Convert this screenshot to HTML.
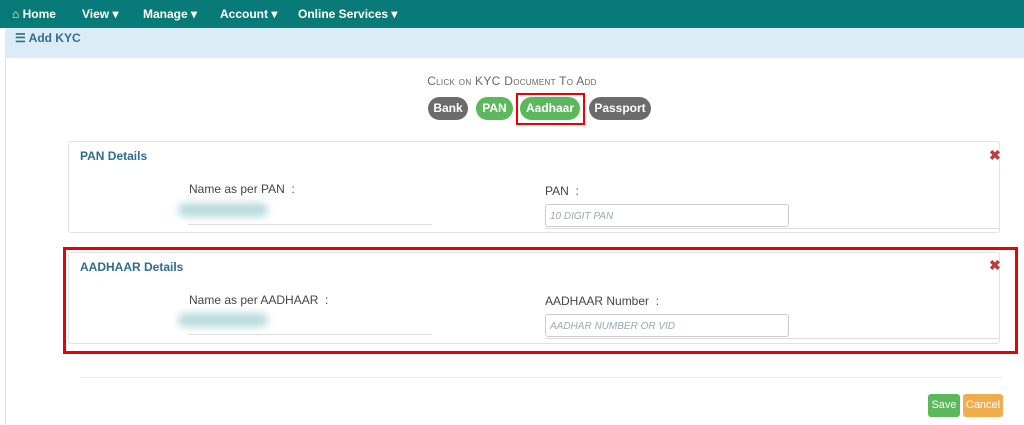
<!DOCTYPE html><html><head><style>
*{box-sizing:border-box;margin:0;padding:0}
body{width:1024px;height:425px;background:#fff;font-family:"Liberation Sans",sans-serif;position:relative;overflow:hidden;color:#333}
.a{position:absolute}
.nav{left:0;top:0;width:1024px;height:28px;background:#087a77;color:#fff;font-weight:bold;font-size:12px}
.nav span{position:absolute;top:7px}
.sub{left:5px;top:28px;width:1019px;height:30px;background:#dcecf6}
.pill{position:absolute;top:97px;height:23px;border-radius:12px;color:#fff;font-weight:bold;font-size:12px;line-height:23px;text-align:center}
.panel{border:1px solid #e2e2e2;border-radius:3px;background:#fff}
.h{color:#2f6d8c;font-weight:bold;font-size:12px}
.lbl{font-size:12px;color:#444}
.x{color:#b94040;font-weight:bold;font-size:14px}
.inp{border:1px solid #ccc;border-radius:3px;height:23px;font-style:italic;font-size:10px;color:#9aa;padding:6px 4px}
.blur{background:#b8dadc;filter:blur(4px);border-radius:8px}
</style></head><body>
<div class="a nav"><span style="left:12px">⌂ Home</span><span style="left:82px">View ▾</span><span style="left:143px">Manage ▾</span><span style="left:220px">Account ▾</span><span style="left:298px">Online Services ▾</span></div>
<div class="a" style="left:5px;top:58px;width:1px;height:367px;background:#dde"></div>
<div class="a sub"><span class="a" style="left:10px;top:3px;color:#2f6d8c;font-weight:bold;font-size:12px">☰ Add KYC</span></div>
<div class="a" style="left:0;top:74px;width:1024px;text-align:center;font-size:12px;color:#666;letter-spacing:.3px;font-variant:small-caps">Click on KYC Document To Add</div>
<div class="pill" style="left:428px;width:40px;background:#6b6b6b">Bank</div>
<div class="pill" style="left:476px;width:37px;background:#5cb85c">PAN</div>
<div class="pill" style="left:520px;width:60px;background:#5cb85c">Aadhaar</div>
<div class="pill" style="left:589px;width:62px;background:#6b6b6b">Passport</div>
<div class="a" style="left:516px;top:93px;width:69px;height:32px;border:2px solid #e00"></div>
<div class="a panel" style="left:68px;top:141px;width:932px;height:92px"></div>
<div class="a h" style="left:80px;top:149px">PAN Details</div>
<div class="a x" style="left:989px;top:147px">✖</div>
<div class="a lbl" style="left:189px;top:182px">Name as per PAN &nbsp;:</div>
<div class="a blur" style="left:178px;top:203px;width:90px;height:14px"></div>
<div class="a" style="left:188px;top:224px;width:244px;height:1px;background:#ddd"></div>
<div class="a lbl" style="left:545px;top:184px">PAN &nbsp;:</div>
<div class="a inp" style="left:545px;top:204px;width:244px">10 DIGIT PAN</div>
<div class="a" style="left:545px;top:228px;width:454px;height:1px;background:#ddd"></div>
<div class="a panel" style="left:68px;top:252px;width:932px;height:92px"></div>
<div class="a h" style="left:80px;top:260px">AADHAAR Details</div>
<div class="a x" style="left:989px;top:257px">✖</div>
<div class="a lbl" style="left:189px;top:293px">Name as per AADHAAR &nbsp;:</div>
<div class="a blur" style="left:178px;top:313px;width:90px;height:14px"></div>
<div class="a" style="left:188px;top:334px;width:244px;height:1px;background:#ddd"></div>
<div class="a lbl" style="left:545px;top:294px">AADHAAR Number &nbsp;:</div>
<div class="a inp" style="left:545px;top:314px;width:244px">AADHAR NUMBER OR VID</div>
<div class="a" style="left:545px;top:338px;width:454px;height:1px;background:#ddd"></div>
<div class="a" style="left:63px;top:247px;width:955px;height:107px;border:3px solid #e00"></div>
<div class="a" style="left:80px;top:377px;width:923px;height:1px;background:#eee"></div>
<div class="a" style="left:928px;top:394px;width:32px;height:23px;background:#5cb85c;border-radius:3px;color:#fff;font-size:11px;line-height:23px;text-align:center">Save</div>
<div class="a" style="left:963px;top:394px;width:40px;height:23px;background:#f0ad4e;border-radius:3px;color:#fff;font-size:11px;line-height:23px;text-align:center">Cancel</div>
</body></html>
